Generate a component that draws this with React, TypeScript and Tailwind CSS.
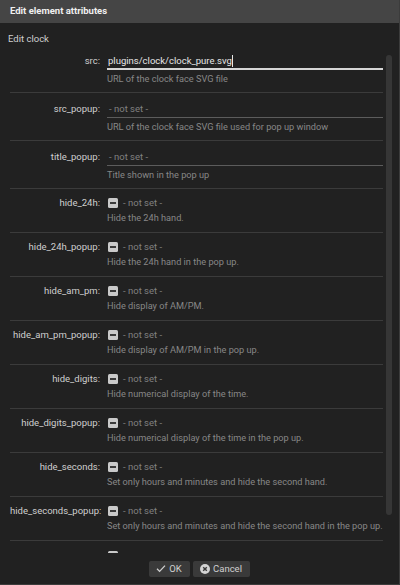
import React from "react";

type Attr = {
  name: string;
  kind: "text" | "check";
  value?: string;
  desc: string;
  focused?: boolean;
};

const attrs: Attr[] = [
  { name: "src", kind: "text", value: "plugins/clock/clock_pure.svg", desc: "URL of the clock face SVG file", focused: true },
  { name: "src_popup", kind: "text", desc: "URL of the clock face SVG file used for pop up window" },
  { name: "title_popup", kind: "text", desc: "Title shown in the pop up" },
  { name: "hide_24h", kind: "check", desc: "Hide the 24h hand." },
  { name: "hide_24h_popup", kind: "check", desc: "Hide the 24h hand in the pop up." },
  { name: "hide_am_pm", kind: "check", desc: "Hide display of AM/PM." },
  { name: "hide_am_pm_popup", kind: "check", desc: "Hide display of AM/PM in the pop up." },
  { name: "hide_digits", kind: "check", desc: "Hide numerical display of the time." },
  { name: "hide_digits_popup", kind: "check", desc: "Hide numerical display of the time in the pop up." },
  { name: "hide_seconds", kind: "check", desc: "Set only hours and minutes and hide the second hand." },
  { name: "hide_seconds_popup", kind: "check", desc: "Set only hours and minutes and hide the second hand in the pop up." },
];

function TriCheck() {
  return (
    <span className="flex h-[10px] w-[10px] shrink-0 items-center justify-center rounded-[1.5px] bg-[#c9c9c9]">
      <span className="h-[2px] w-[6px] bg-[#3a3a3a]" />
    </span>
  );
}

function Row({ attr, first }: { attr: Attr; first: boolean }) {
  return (
    <div className={`grid grid-cols-[90px_1fr] gap-x-[7px] ${first ? "" : "border-t border-[#3b3b3b]"}`}>
      {attr.kind === "text" ? (
        <>
          <div className="pt-[8px] text-right leading-[16px] text-[#cfcfcf]">{attr.name}:</div>
          <div className="pt-[8px]">
            <div
              className={`flex h-[17px] items-start px-[1px] leading-[16px] ${
                attr.focused ? "border-b-2 border-[#d6d6d6] text-[#e6e6e6]" : "border-b border-[#5c5c5c] text-[#808080]"
              }`}
            >
              {attr.value ? (
                <>
                  <span>{attr.value}</span>
                  <span className="mt-[2px] h-[12px] w-px bg-[#e6e6e6]" />
                </>
              ) : (
                <span className="pl-[1px]">- not set -</span>
              )}
            </div>
            <div className="mt-[3px] whitespace-nowrap pb-[7px] text-[9.2px] leading-[12px] text-[#878787]">{attr.desc}</div>
          </div>
        </>
      ) : (
        <>
          <div className="whitespace-nowrap pt-[8px] text-right leading-[12px] text-[#cfcfcf]">{attr.name}:</div>
          <div className="pt-[8px]">
            <div className="flex h-[12px] items-center gap-[5px] pl-[1px] text-[#808080]">
              <TriCheck />
              <span>- not set -</span>
            </div>
            <div className="mt-[3px] whitespace-nowrap pb-[8px] text-[9.2px] leading-[12px] text-[#878787]">{attr.desc}</div>
          </div>
        </>
      )}
    </div>
  );
}

export default function App() {
  return (
    <div
      className="flex h-[585px] w-[400px] flex-col overflow-hidden border-r border-b border-[#3c3c3c] bg-[#212121] text-[9.5px]"
      style={{ fontFamily: "Roboto, 'Liberation Sans', sans-serif" }}
    >
      {/* Title */}
      <div className="flex h-[23px] shrink-0 items-center bg-[#454545] px-[10px] text-[9.5px] font-bold text-[#f0f0f0]">
        Edit element attributes
      </div>

      <div className="shrink-0 px-[8px] pt-[10px] leading-[12px] text-[#cfcfcf]">Edit clock</div>

      {/* Scrolling attribute list */}
      <div className="relative flex-1 overflow-hidden">
        <div className="pl-[10px] pr-[16px]">
          {attrs.map((a, i) => (
            <Row key={a.name} attr={a} first={i === 0} />
          ))}
          {/* next row, scrolled out of view: only its checkbox peeks in */}
          <div className="grid grid-cols-[90px_1fr] gap-x-[7px] border-t border-[#3b3b3b]">
            <div />
            <div className="pt-[10px] pl-[1px]">
              <TriCheck />
            </div>
          </div>
        </div>
        <div className="absolute top-[10px] left-[386px] h-[460px] w-[6px] rounded-full bg-[#363636]" />
      </div>

      {/* Buttons */}
      <div className="flex h-[31px] shrink-0 items-center justify-center gap-[3px] pr-[1px]">
        <button className="flex h-[16px] w-[41px] items-center justify-center gap-[3px] rounded-[2px] bg-[#3a3a3a] leading-none text-[#cfcfcf]">
          <svg width="10" height="9" viewBox="0 0 10 9" fill="none">
            <path d="M1 4.8 L3.6 7.4 L9 1.6" stroke="#cfcfcf" strokeWidth="1.3" />
          </svg>
          <span>OK</span>
        </button>
        <button className="flex h-[16px] w-[57px] items-center justify-center gap-[3px] rounded-[2px] bg-[#3a3a3a] leading-none text-[#cfcfcf]">
          <svg width="10" height="10" viewBox="0 0 10 10">
            <circle cx="5" cy="5" r="5" fill="#d4d4d4" />
            <path d="M3.2 3.2 L6.8 6.8 M6.8 3.2 L3.2 6.8" stroke="#3a3a3a" strokeWidth="1.4" />
          </svg>
          <span>Cancel</span>
        </button>
      </div>
    </div>
  );
}
